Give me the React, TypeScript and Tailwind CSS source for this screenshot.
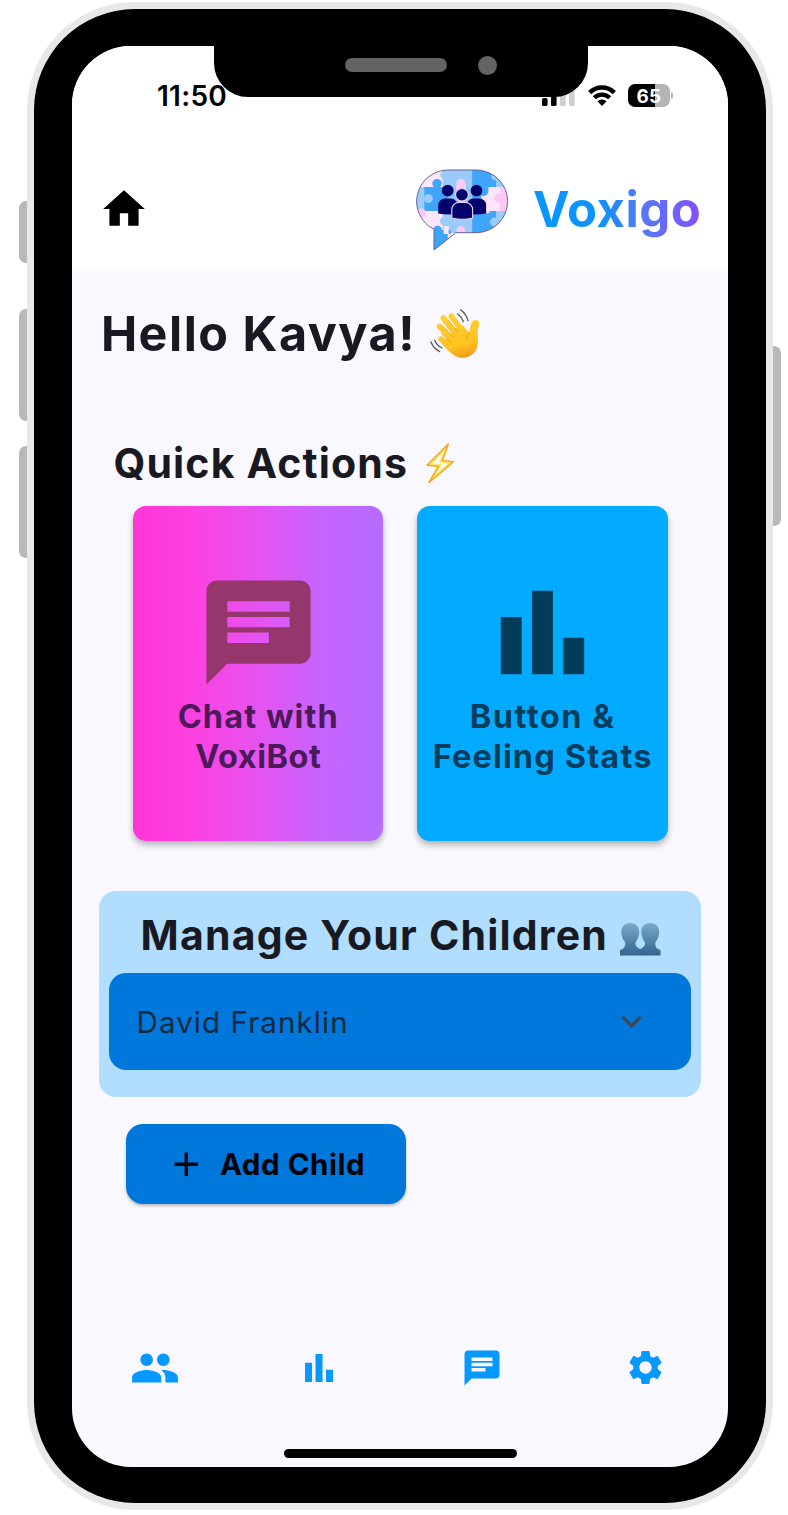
import { MdAdd, MdBarChart, MdChat, MdExpandMore, MdHome, MdPeople, MdSettings } from 'react-icons/md';

function SignalIcon() {
  return (
    <svg className="-mt-[3px] h-[23px] w-[33px]" viewBox="0 0 33 23">
      <rect x="0" y="15" width="5.6" height="8" rx="1.6" fill="#000" />
      <rect x="9" y="11" width="5.6" height="12" rx="1.6" fill="#000" />
      <rect x="18" y="6" width="5.6" height="17" rx="1.6" fill="#cfcfcf" />
      <rect x="27" y="1" width="5.6" height="22" rx="1.6" fill="#cfcfcf" />
    </svg>
  );
}

function WifiIcon() {
  return (
    <svg className="-mt-px h-[21px] w-7" viewBox="0 0 28 21">
      <path d="M1.700 7.600a17.400 17.400 0 0 1 24.600 0" fill="none" stroke="#000" strokeWidth="4.500" />
      <path d="M6.300 12.800a10.800 10.800 0 0 1 15.400 0" fill="none" stroke="#000" strokeWidth="4.200" />
      <path d="M14 21l-4.600-4.700a6.500 6.500 0 0 1 9.200 0z" fill="#000" />
    </svg>
  );
}

function Battery() {
  return (
    <div className="-mt-px flex items-center gap-[1.5px]">
      <div className="flex h-[23px] w-[41.500px] items-center justify-center rounded-[7px] bg-[linear-gradient(90deg,#000_65%,#b4b4b4_65%)] pt-px text-[19px] leading-none font-bold tracking-[0.2px] text-white">
        65
      </div>
      <div className="h-[7px] w-[2px] rounded-r-full bg-[#b4b4b4]" />
    </div>
  );
}

function Logo() {
  const bubble = 'M42.300 10H72.300A31.400 31.400 0 0 1 72.300 72.700H51L29.500 90V69.300A31.400 31.400 0 0 1 42.300 10Z';
  return (
    <svg className="mt-[2px] h-[100px] w-[122px]" viewBox="0 0 120 100" preserveAspectRatio="none">
      <defs>
        <clipPath id="bubble">
          <path d={bubble} />
        </clipPath>
      </defs>
      <g clipPath="url(#bubble)">
        <rect x="8" y="8" width="100" height="84" fill="#fde5fb" />
        <rect x="38" y="8" width="29" height="19" fill="#9bcbf9" />
        <circle cx="40" cy="15" r="4.3" fill="#9bcbf9" />
        <path d="M67 8h24v19h-8v4a5 5 0 0 1-9 3h-7z" fill="#3fa5f8" />
        <rect x="91" y="8" width="18" height="19" fill="#9bcbf9" />
        <circle cx="90" cy="16" r="4.3" fill="#9bcbf9" />
        <rect x="8" y="27" width="13" height="24" fill="#9bcbf9" />
        <rect x="20" y="27" width="24" height="24" fill="#3fa5f8" />
        <circle cx="32.5" cy="23.5" r="4.6" fill="#3fa5f8" />
        <circle cx="24" cy="38.5" r="4.4" fill="#9bcbf9" />
        <rect x="43" y="27" width="24" height="24" fill="#8cc4f9" />
        <circle cx="56" cy="23.5" r="4.6" fill="#fac9f6" />
        <rect x="51" y="25" width="10" height="7" fill="#fac9f6" />
        <rect x="67" y="34" width="9" height="17" fill="#3fa5f8" />
        <rect x="94" y="27" width="14" height="24" fill="#fac9f6" />
        <circle cx="93" cy="38" r="4.4" fill="#fac9f6" />
        <circle cx="17" cy="53" r="4.5" fill="#fac9f6" />
        <rect x="38" y="51" width="29" height="22" fill="#9bcbf9" />
        <circle cx="40" cy="61" r="4.5" fill="#9bcbf9" />
        <rect x="67" y="51" width="24" height="24" fill="#3fa5f8" />
        <circle cx="81" cy="50" r="3.5" fill="#fde5fb" />
        <rect x="91" y="51" width="16" height="24" fill="#9bcbf9" />
        <circle cx="89" cy="62" r="4.4" fill="#9bcbf9" />
        <path d="M29 70h17v4h-3v18H29z" fill="#3fa5f8" />
        <circle cx="33" cy="70" r="4.300" fill="#3fa5f8" />
        <path d="M39 66h5v8h-5z" fill="#fde5fb" />
        <circle cx="56" cy="70.5" r="4.4" fill="#fac9f6" />
      </g>
      <path d={bubble} fill="none" stroke="#5e5689" strokeWidth="0.9" />
      <g fill="#04006c">
        <circle cx="43" cy="30.6" r="5.8" />
        <circle cx="71.3" cy="30.6" r="5.8" />
        <path d="M33.7 53.500V45a6.500 6.500 0 0 1 6.500-6.500h6A6.500 6.500 0 0 1 52.700 45v9.200q-10 1-19-.700z" />
        <path d="M80.800 53.500V45a6.500 6.500 0 0 0-6.500-6.500h-6A6.500 6.500 0 0 0 61.800 45v9.200q10 1 19-.700z" />
      </g>
      <g fill="#04006c" stroke="#f3d6f8" strokeWidth="1.1">
        <circle cx="57" cy="34.8" r="6.3" />
        <path d="M47 58V49.500a7 7 0 0 1 7-7h6.500a7 7 0 0 1 7 7V58q-10.300 2.600-20.500 0z" />
      </g>
    </svg>
  );
}

function WavingHand() {
  return (
    <svg className="h-[51px] w-[51px]" viewBox="28 36 153 153">
      <defs>
        <linearGradient id="skin" gradientUnits="userSpaceOnUse" x1="90" y1="50" x2="125" y2="190">
          <stop offset="0" stopColor="#ffcf36" />
          <stop offset="0.7" stopColor="#ffc21f" />
          <stop offset="1" stopColor="#ee9a18" />
        </linearGradient>
      </defs>
      <g stroke="url(#skin)" strokeLinecap="round" fill="none">
        <path d="M92 61 130 112" strokeWidth="17" />
        <path d="M68 66 110 122" strokeWidth="17" />
        <path d="M57 92 100 137" strokeWidth="17" />
        <path d="M61 129 98 155" strokeWidth="16" />
      </g>
      <path
        d="M92 100 127 88C136 101 142 109 146 108 149 100 148 92 152 82 156 70 169 69 175 77 177 84 172 93 171 104 170 120 175 133 170 152 163 176 140 188 118 185 98 182 76 158 57 136L90 125Z"
        fill="url(#skin)"
      />
      <g fill="none" stroke="#dfa01f" strokeWidth="2.600" strokeLinecap="round">
        <path d="M84 74 112 108" />
        <path d="M68 92 99 124" />
        <path d="M62 113 91 138" />
        <path d="M146 109Q138 117 137 130" />
      </g>
      <g fill="none" stroke="#55585e" strokeWidth="4" strokeLinecap="round">
        <path d="M120 41Q137 54 142 74" />
        <path d="M111 54Q123 62 128 77" />
        <path d="M31 138Q38 157 57 167" />
        <path d="M42 133Q48 149 64 156" />
      </g>
    </svg>
  );
}

function Bolt() {
  return (
    <svg className="h-[42px] w-[30px]" viewBox="0 0 30 42">
      <path
        d="M23.300 2 2 23.200 13.500 24.200 4 40.500 28.500 19.700 17.200 18.500Z"
        fill="#ffe96b"
        stroke="#fba71b"
        strokeWidth="1.600"
        strokeLinejoin="round"
      />
      <path d="M19.500 9 7.500 21.300 17 22.200 11.500 31 23 21.400 14 20.500Z" fill="#fffef0" stroke="#fff3a0" strokeWidth="0.800" />
    </svg>
  );
}

function Silhouettes() {
  const bust =
    'M10.300 0C16 0 19.400 3.800 19.200 9.500 19 13.500 17.500 16.500 15.500 19.500 15.300 22.500 16.500 24.500 20.500 26V32.500H0V27C4 25.800 5.500 24 5.200 19.500 3 16.500 1.500 13.500 1.300 9.500 1.200 3.800 4.600 0 10.300 0Z';
  return (
    <svg className="h-[33px] w-[41px]" viewBox="0 0 41 33">
      <defs>
        <linearGradient id="bust" x1="0" y1="0" x2="0" y2="1">
          <stop offset="0" stopColor="#78abca" />
          <stop offset="1" stopColor="#33648e" />
        </linearGradient>
      </defs>
      <path d={bust} fill="url(#bust)" />
      <path d={bust} fill="url(#bust)" transform="translate(40.500 0) scale(-1 1)" />
    </svg>
  );
}

const navItems = [
  { label: 'People', Icon: MdPeople, size: 50 },
  { label: 'Stats', Icon: MdBarChart, size: 42 },
  { label: 'Chat', Icon: MdChat, size: 42 },
  { label: 'Settings', Icon: MdSettings, size: 41 },
];

export default function App() {
  return (
    <div className="relative h-[1515px] w-[788px] overflow-hidden bg-white pt-[1.7px] pl-[26.7px] font-[Inter,'Noto_Sans',sans-serif]">
      <div className="absolute top-[201px] left-[19px] h-[62px] w-[9px] rounded-l-[7px] bg-[#b8b8b8]" />
      <div className="absolute top-[309px] left-[19px] h-[112px] w-[9px] rounded-l-[7px] bg-[#b8b8b8]" />
      <div className="absolute top-[446px] left-[19px] h-[112px] w-[9px] rounded-l-[7px] bg-[#b8b8b8]" />
      <div className="absolute top-[346px] left-[772px] h-[180px] w-[9px] rounded-r-[7px] bg-[#b8b8b8]" />

      <div className="relative h-[1508.3px] w-[746.6px] rounded-[108px] bg-[#e8e8e8] px-[7.500px] pt-[7.300px] pb-[7.300px]">
        <div className="h-full rounded-[101px] bg-black px-[38.200px] pt-[37.500px] pb-[35.700px]">
          <div className="relative flex h-full flex-col overflow-hidden rounded-[59px] bg-[#f9f8fe]">
            <div className="absolute -top-px left-[141.500px] z-10 h-[52px] w-[374px] rounded-b-[34px] bg-black">
              <div className="absolute top-[12.500px] left-[131.500px] h-3.5 w-[102px] rounded-full bg-[#636363]" />
              <div className="absolute top-[10.500px] left-[264.500px] size-[19px] rounded-full bg-[#636363]" />
            </div>

            <header className="flex h-[224.500px] shrink-0 flex-col bg-white">
              <div className="flex items-center pt-[36px] pr-[54.500px] pl-[84.500px]">
                <span className="text-[28px] leading-[28px] font-semibold tracking-[0.300px] text-black">11:50</span>
                <div className="ml-auto flex items-center gap-[12.500px]">
                  <SignalIcon />
                  <WifiIcon />
                  <Battery />
                </div>
              </div>
              <div className="flex items-center pt-[48px] pl-[27px]">
                <MdHome className="-mt-px size-[50px] text-black" />
                <div className="ml-[254.500px]">
                  <Logo />
                </div>
                <span className="mt-[2px] ml-[7px] bg-[linear-gradient(90deg,#0898ff_0%,#0f92fc_40%,#5578fa_65%,#8450fa_100%)] bg-clip-text text-[49px] leading-[60px] font-bold tracking-[0.500px] text-transparent">
                  Voxigo
                </span>
              </div>
            </header>

            <main className="flex flex-1 flex-col">
              <h1 className="mt-[38.500px] ml-[28.500px] flex h-12 items-center gap-[14px] text-[48.500px] leading-[48px] font-bold tracking-[1.500px] text-[#191a21]">
                <span className="pt-[2px]">Hello Kavya!</span>
                <WavingHand />
              </h1>
              <h2 className="mt-[82px] ml-[41px] flex h-12 items-center gap-[17px] text-[41px] leading-[48px] font-bold tracking-[1.160px] text-[#191a21]">
                Quick Actions
                <Bolt />
              </h2>

              <div className="mt-[18.700px] ml-[60.800px] flex h-[334.700px] gap-[34px]">
                <button className="flex w-[250.300px] flex-col items-center justify-center rounded-[13px] bg-[linear-gradient(90deg,#ff35d6_0%,#ff3fe0_22%,#e553f0_50%,#c864ff_75%,#b56cff_100%)] text-[32.500px] leading-[40px] font-bold text-[#4c1959] shadow-[0_4px_6px_rgba(0,0,0,0.28)]">
                  <MdChat className="mb-[1.500px] size-[125px] text-[#95366d]" />
                  <span className="tracking-[1.080px]">Chat with</span>
                  <span className="tracking-[0.500px]">VoxiBot</span>
                </button>
                <button className="flex w-[250.300px] flex-col items-center justify-center rounded-[13px] bg-[#02abff] text-[32.500px] leading-[40px] font-bold text-[#053d5c] shadow-[0_4px_6px_rgba(0,0,0,0.28)]">
                  <MdBarChart className="mb-[1.500px] size-[125px] text-[#033c59]" />
                  <span className="tracking-[1.500px]">Button &amp;</span>
                  <span className="tracking-[1.140px]">Feeling Stats</span>
                </button>
              </div>

              <section className="mt-[50.500px] ml-[26.700px] h-[205.300px] w-[602.300px] rounded-[17px] bg-[#b1deff] px-[10px] pt-5">
                <h2 className="ml-[31.500px] flex h-12 items-center gap-[12px] text-[41px] leading-[48px] font-bold tracking-[1.200px] text-[#191a21]">
                  Manage Your Children
                  <span className="mt-[8px]">
                    <Silhouettes />
                  </span>
                </h2>
                <button className="mt-[14px] flex h-[97px] w-full items-center justify-between rounded-[17px] bg-[#0077db] pr-[39px] pl-[27.500px] text-[29.500px] tracking-[1.080px] text-[#14283f]">
                  <span>David Franklin</span>
                  <MdExpandMore className="size-[41px] text-[#3c4856]" />
                </button>
              </section>

              <button className="mt-[27px] ml-[53.500px] flex h-[80.300px] w-[279.700px] items-center rounded-[17px] bg-[#0077db] pl-[40px] text-[29.500px] font-bold tracking-[0.560px] text-[#020308] shadow-[0_2px_3px_rgba(0,0,0,0.25)]">
                <MdAdd className="mr-[13.500px] size-[40.500px]" />
                <span className="pt-px">Add Child</span>
              </button>
            </main>

            <nav className="grid h-[50px] grid-cols-4 place-items-center pl-px text-[#0598ff]">
              {navItems.map(({ label, Icon, size }) => (
                <button key={label} aria-label={label}>
                  <Icon size={size} />
                </button>
              ))}
            </nav>
            <div className="mt-[56.500px] mb-[9.300px] ml-[211.500px] h-[8.700px] w-[233.500px] shrink-0 rounded-full bg-black" />
          </div>
        </div>
      </div>
    </div>
  );
}
